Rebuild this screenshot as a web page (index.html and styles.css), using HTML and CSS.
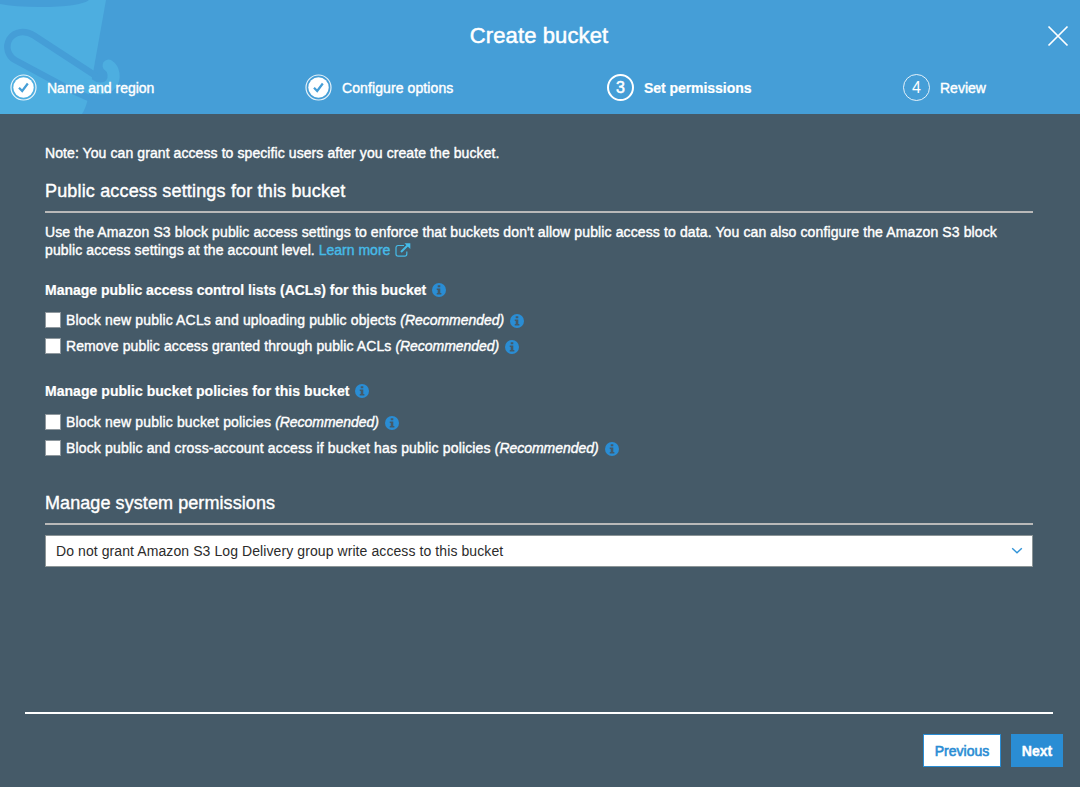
FILE: index.html
```html
<!DOCTYPE html>
<html lang="en">
<head>
<meta charset="utf-8">
<title>Create bucket</title>
<link rel="stylesheet" href="styles.css">
</head>
<body>
<svg class="defs" width="0" height="0" aria-hidden="true">
  <symbol id="info" viewBox="0 0 13 13"><circle cx="6.5" cy="6.5" r="6.5" fill="#2a8dd4"/><path d="M5.300 2h2.400v2H5.300zM4.400 5h3.300v4.200h1v1.500H4.400V9.200h.9V6.500h-.9z" fill="#455a68"/></symbol>
  <symbol id="done" viewBox="0 0 27 27"><circle cx="13.5" cy="13.5" r="12.5" fill="none" stroke="#fff" stroke-opacity=".85" stroke-width="1.2"/><circle cx="13.5" cy="13.5" r="10.2" fill="#fff"/><path d="M9 13.700l3.200 3.300 5.600-7.500" fill="none" stroke="#459ed7" stroke-width="2.200"/></symbol>
</svg>
<div class="dialog">
  <header class="header">
    <svg class="bucket" width="130" height="114" viewBox="0 0 130 114" aria-hidden="true">
      <path d="M0 0H106L93 73L88 98Q86 108 82 114H0Z" fill="#4daee0"/>
      <path d="M0 0H89Q80 7 40 7Q14 7 0 4Z" fill="#459ed7"/>
      <path d="M108.500 65.500C114 69 115.500 78 111 84C106 90 96 90 88 84" fill="none" stroke="#4daee0" stroke-width="12" stroke-linecap="round"/>
      <path d="M96 76L34 35.500C25 30 15 31 9.500 39C5 47 8 56 15 60L70 89.500L89 98" fill="none" stroke="#459ed7" stroke-width="6.500"/>
    </svg>
    <h1 class="title"><span class="t-title">Create bucket</span></h1>
    <svg class="close" width="22" height="22" viewBox="0 0 22 22"><path d="M1.500 1.500l19 19M20.500 1.500l-19 19" fill="none" stroke="#fff" stroke-width="1.700"/></svg>
    <nav class="steps">
      <div class="step"><svg class="mark"><use href="#done"/></svg><span>Name and region</span></div>
      <div class="step"><svg class="mark"><use href="#done"/></svg><span class="t-conf">Configure options</span></div>
      <div class="step current"><span class="mark number">3</span><span class="t-set">Set permissions</span></div>
      <div class="step"><span class="mark number">4</span><span class="t-review">Review</span></div>
    </nav>
  </header>
  <main class="content">
    <p class="note">Note: You can grant access to specific users after you create the bucket.</p>
    <h2 class="section">Public access settings for this bucket</h2>
    <p class="intro"><span class="t-intro">Use the Amazon S3 block public access settings to enforce that buckets don't allow public access to data. You can also configure the Amazon S3 block</span><br><span class="t-intro">public access settings at the account level.</span> <a class="link"><span>Learn more</span><svg class="external" width="16" height="15" viewBox="0 0 16 15"><path d="M9 2.500H3.200Q1 2.500 1 4.700V11Q1 13.200 3.200 13.200H9.600Q11.800 13.200 11.800 11V8.500" fill="none" stroke="currentColor" stroke-width="1.200"/><path d="M6 9l7-7" stroke="currentColor" stroke-width="2"/><path d="M9.500.3H15.300v5.800z" fill="currentColor"/></svg></a></p>
    <section class="group">
      <h3 class="group-title"><span>Manage public access control lists (ACLs) for this bucket</span><svg class="info"><use href="#info"/></svg></h3>
      <label class="option"><span class="box"></span><span class="t-wide">Block new public ACLs and uploading public objects <em>(Recommended)</em></span><svg class="info"><use href="#info"/></svg></label>
      <label class="option"><span class="box"></span><span class="t-remove">Remove public access granted through public ACLs <em>(Recommended)</em></span><svg class="info"><use href="#info"/></svg></label>
    </section>
    <section class="group policies">
      <h3 class="group-title"><span class="t-pol">Manage public bucket policies for this bucket</span><svg class="info"><use href="#info"/></svg></h3>
      <label class="option"><span class="box"></span><span class="t-wide">Block new public bucket policies <em>(Recommended)</em></span><svg class="info"><use href="#info"/></svg></label>
      <label class="option"><span class="box"></span><span class="t-wide">Block public and cross-account access if bucket has public policies <em>(Recommended)</em></span><svg class="info"><use href="#info"/></svg></label>
    </section>
    <h2 class="section system">Manage system permissions</h2>
    <div class="select"><span>Do not grant Amazon S3 Log Delivery group write access to this bucket</span><svg width="12" height="8" viewBox="0 0 12 8"><path d="M1.200 1.200L6 5.800l4.800-4.600" fill="none" stroke="#3294d8" stroke-width="1.400"/></svg></div>
  </main>
  <footer class="footer">
    <button class="button previous">Previous</button>
    <button class="button next">Next</button>
  </footer>
</div>
</body>
</html>
```
FILE: styles.css
```css
* { box-sizing: border-box; }
body { margin: 0; background: #455a68; color: #fff; font: 14px/18px "Liberation Sans", Arial, sans-serif; }
h1, h2, h3, p { margin: 0; font-weight: normal; }
svg { display: block; flex: none; }
span { white-space: nowrap; }
.defs { position: absolute; }
.dialog { height: 787px; display: flex; flex-direction: column; -webkit-text-stroke: .4px currentColor; }
.header { position: relative; height: 114px; background: #459ed7; }
.bucket { position: absolute; left: 0; top: 0; }
.title { position: relative; padding: 23px 2px 0 0; font-size: 22px; line-height: 26px; text-align: center; letter-spacing: .12px; -webkit-text-stroke: .5px #fff; }
.close { position: absolute; right: 11px; top: 25px; }
.steps { position: relative; display: grid; grid-template-columns: 295px 302px 296px 1fr; padding: 25px 0 0 10px; }
.step { display: flex; align-items: center; gap: 10px; }
.t-conf { letter-spacing: .1px; }
.mark { width: 27px; height: 27px; flex: none; }
.number { border: 1px solid rgba(255,255,255,.85); border-radius: 50%; font-size: 16px; line-height: 26px; text-align: center; -webkit-text-stroke: 0; }
.current { font-weight: bold; }
.t-set { letter-spacing: -.05px; }
.current .number { border: 2px solid #fff; line-height: 24px; font-weight: normal; -webkit-text-stroke: .5px #fff; }
.current, .group-title { -webkit-text-stroke: .2px #fff; }
.content { flex: 1; padding: 30px 47px 0 45px; }
.note { letter-spacing: .085px; }
.section { margin-top: 18px; padding-bottom: 9px; border-bottom: 2px solid #b9b9b9; font-size: 18px; line-height: 22px; letter-spacing: .165px; }
.intro { margin-top: 10px; }
.t-intro { letter-spacing: .12px; }
.link { color: #45bbe8; }
.external { display: inline-block; margin-left: 5px; vertical-align: -3px; }
.group { margin-top: 22px; }
.policies { margin-top: 27px; }
.group-title { display: flex; align-items: center; gap: 6px; margin-bottom: 12px; font-size: 14px; font-weight: bold; }
.t-pol { letter-spacing: .04px; }
.policies .group-title { margin-bottom: 13px; }
.info { width: 14px; height: 14px; }
.option { display: flex; align-items: center; margin-bottom: 8px; }
.option:last-child { margin-bottom: 0; }
.option .info { margin: 1px 0 0 6px; }
.option em { letter-spacing: -.04px; }
.t-wide { letter-spacing: .16px; }
.t-remove { letter-spacing: .1px; }
.box { width: 16px; height: 16px; margin-right: 5px; flex: none; background: #fff; border: 1px solid #8f989e; }
.system { margin-top: 35px; letter-spacing: .08px; }
.select { display: flex; align-items: center; justify-content: space-between; height: 32px; margin-top: 10px; padding: 0 9px 0 10px; border: 1px solid #8c9597; background: #fff; color: #2b2b2b; letter-spacing: .087px; -webkit-text-stroke: 0; }
.footer { display: flex; justify-content: flex-end; gap: 10px; height: 75px; margin: 0 27px 0 25px; padding-top: 20px; border-top: 2px solid #fff; }
.button { height: 33px; padding: 0; border: 1px solid #2a8dd4; font: bold 14px "Liberation Sans", Arial, sans-serif; }
.previous { width: 78px; background: #fff; color: #2a8dd4; font-weight: normal; -webkit-text-stroke: .6px currentColor; }
.next { width: 52px; margin-right: -10px; background: #2a8dd4; color: #fff; }
```
